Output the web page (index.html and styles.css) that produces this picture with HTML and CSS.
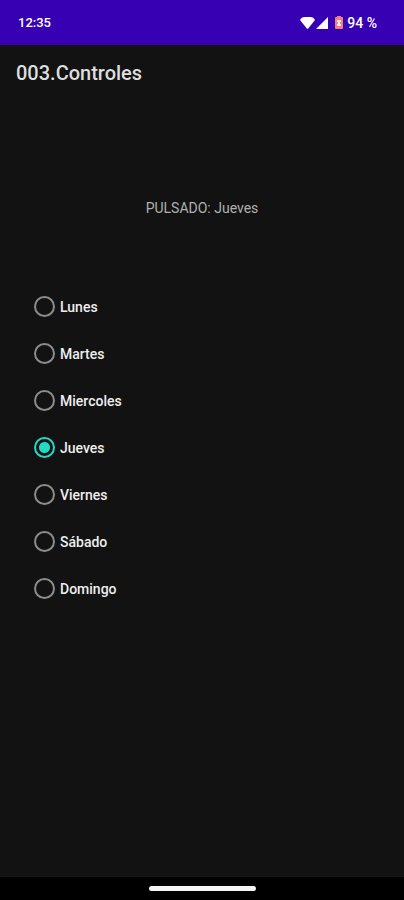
FILE: index.html
```html
<!DOCTYPE html>
<html lang="es">
<head>
<meta charset="utf-8">
<meta name="viewport" content="width=device-width, initial-scale=1">
<title>003.Controles</title>
<link rel="stylesheet" href="styles.css">
</head>
<body>
<div class="screen">
  <header class="status">
    <span class="time">12:35</span>
    <div class="indicators">
      <div class="network">
        <svg class="wifi" viewBox="0 0 15 12" aria-hidden="true"><path d="M0 3Q1.500 0 4.500 0H10.500Q13.500 0 15 3L8.200 11.500Q7.500 12.300 6.800 11.500Z" fill="#fff"/></svg>
        <svg class="signal" viewBox="0 0 12 12" aria-hidden="true"><path d="M12 0V12H0Z" fill="#fff"/></svg>
      </div>
      <div class="power">
        <svg class="battery" viewBox="0 0 8 13" aria-hidden="true"><path d="M2 0h4v1h1q1 0 1 1v10q0 1-1 1H1q-1 0-1-1V2q0-1 1-1h1Z" fill="#ef7f86"/><path d="M2 4h4v2H2ZM2 8h4v2H2Z" fill="#ffe9df"/><path d="M3 5h2v4H3Z" fill="#ffe9df"/></svg>
        <span class="percent">94 %</span>
      </div>
    </div>
  </header>
  <main class="content">
    <h1 class="title">003.Controles</h1>
    <p class="result">PULSADO: Jueves</p>
    <form class="days">
      <label class="day"><input type="radio" name="day">Lunes</label>
      <label class="day"><input type="radio" name="day">Martes</label>
      <label class="day"><input type="radio" name="day">Miercoles</label>
      <label class="day"><input type="radio" name="day" checked>Jueves</label>
      <label class="day"><input type="radio" name="day">Viernes</label>
      <label class="day"><input type="radio" name="day">Sábado</label>
      <label class="day"><input type="radio" name="day">Domingo</label>
    </form>
  </main>
  <footer class="navigation"><div class="handle"></div></footer>
</div>
</body>
</html>
```
FILE: styles.css
```css
* { box-sizing: border-box; }
body {
  margin: 0;
  background: #121212;
  color: #fff;
  font-family: Roboto, sans-serif;
}
.screen {
  min-height: 100vh;
  display: flex;
  flex-direction: column;
}
.status {
  height: 45px;
  padding: 0 27px 0 18px;
  display: flex;
  align-items: center;
  justify-content: space-between;
  background: #3700b3;
  font-size: 13px;
  font-weight: 500;
}
.indicators { display: flex; align-items: center; gap: 7px; }
.network { display: flex; align-items: center; gap: 1px; }
.power { display: flex; align-items: center; gap: 4px; }
.wifi { width: 15px; height: 12px; }
.signal { width: 12px; height: 12px; }
.battery { width: 8px; height: 13px; }
.percent { font-size: 14px; }
.content { flex: 1; }
.title {
  margin: 0;
  padding: 16px;
  font-size: 20px;
  line-height: 24px;
  font-weight: 500;
  color: #dedede;
}
.result {
  margin: 99px 0 0;
  text-align: center;
  font-size: 14px;
  line-height: 16px;
  color: #b0b0b0;
}
.days {
  margin-top: 67px;
  padding-left: 34px;
  display: flex;
  flex-direction: column;
  align-items: flex-start;
}
.day {
  height: 47px;
  display: flex;
  align-items: center;
  gap: 5px;
  font-size: 14px;
  font-weight: 500;
  color: #eee;
}
.day input {
  appearance: none;
  width: 21px;
  height: 21px;
  margin: 0;
  border: 2px solid #8c8c8c;
  border-radius: 50%;
}
.day input:checked {
  border-color: #1fdac5;
  background: radial-gradient(circle, #1fdac5 5px, transparent 6px);
}
.navigation {
  height: 23px;
  display: flex;
  align-items: center;
  justify-content: center;
  background: #000;
}
.handle { width: 107px; height: 5px; border-radius: 3px; background: #f5f5f5; }
```
